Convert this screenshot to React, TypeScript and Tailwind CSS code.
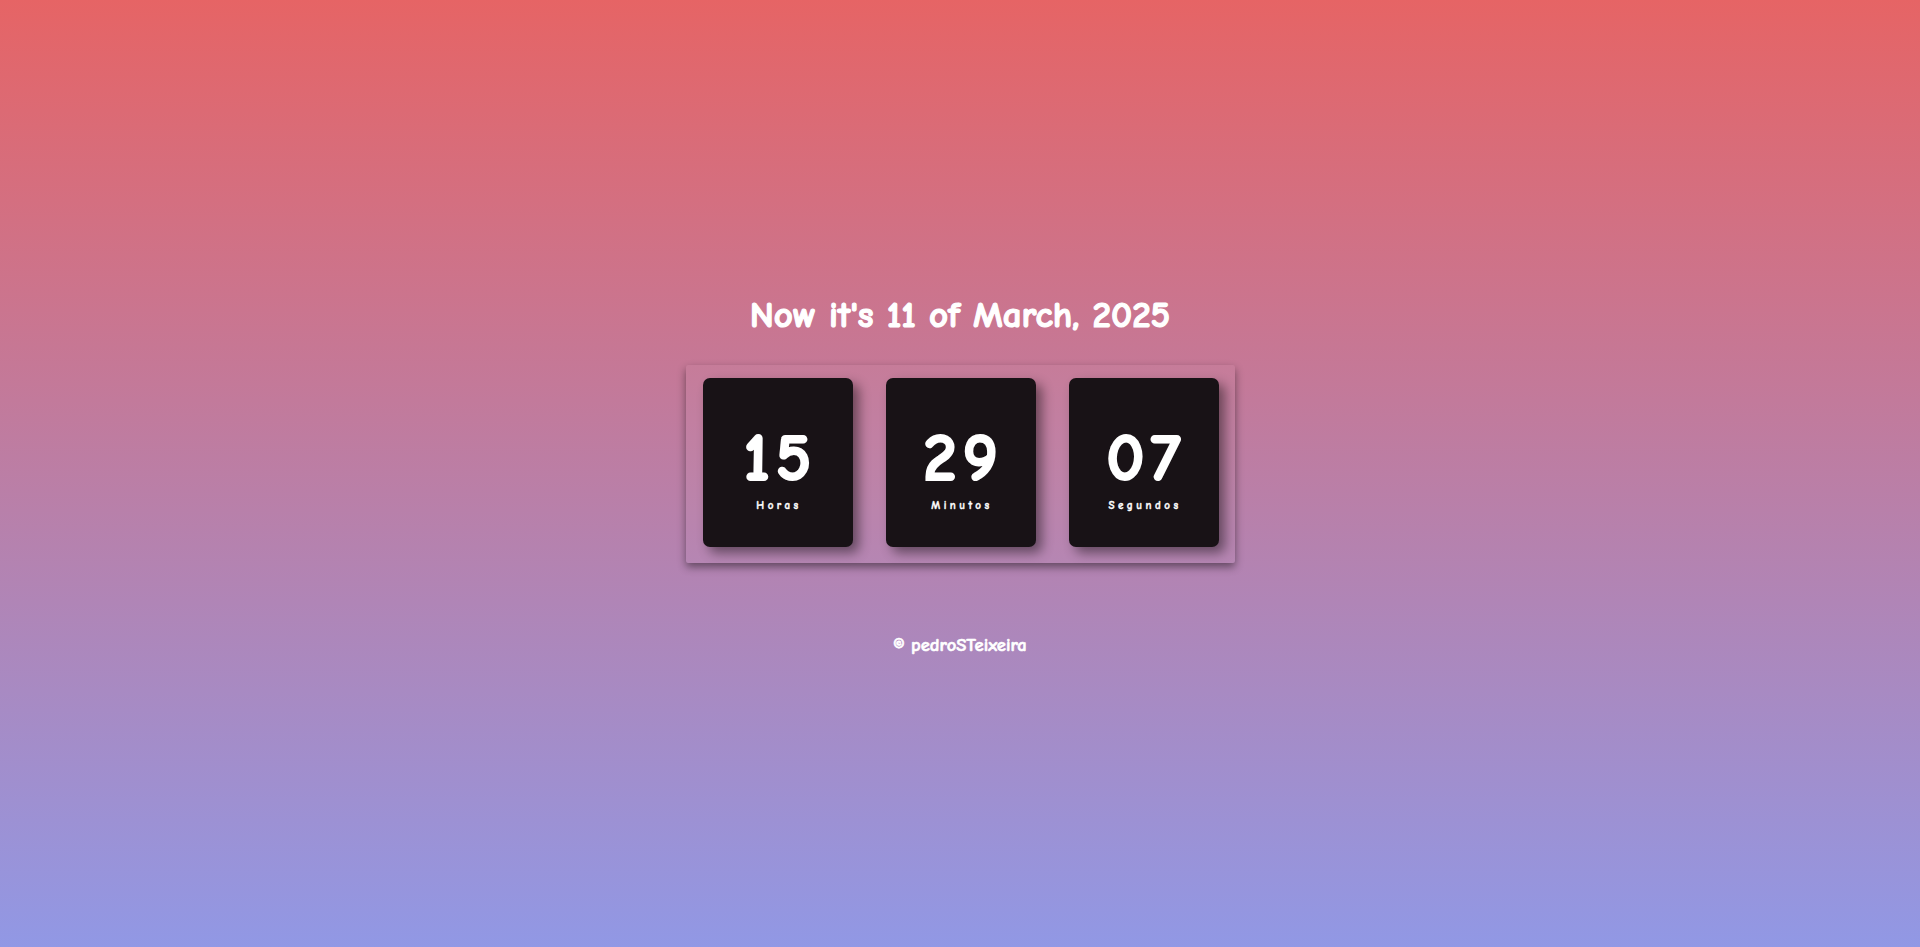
const units = [
  { value: '15', label: 'Horas' },
  { value: '29', label: 'Minutos' },
  { value: '07', label: 'Segundos' },
];

export default function App() {
  return (
    <div className="min-h-screen w-full bg-[linear-gradient(#e66465,#9198e5)] flex flex-col items-center justify-center text-white font-['Comic_Sans_MS','Comic_Neue','Liberation_Sans',sans-serif]">
      <h1 className="text-[37px] leading-[36px] font-bold [-webkit-text-stroke:1.2px_white] mt-[4px]">Now it's 11 of March, 2025</h1>

      {/* clock panel */}
      <div className="mt-[32px] flex gap-[33px] pl-[17px] pr-[16px] pt-[13px] pb-[16px] rounded-[2px] bg-white/[0.03] shadow-[0_4px_8px_rgba(0,0,0,0.45)]">
        {units.map((u) => (
          <div
            key={u.label}
            className="w-[150px] h-[169px] rounded-[7px] bg-[#181216] flex flex-col items-center justify-center shadow-[6px_6px_12px_rgba(0,0,0,0.45)]"
          >
            <span className="text-[67px] leading-[60px] font-bold tracking-[6px] pl-[6px] mt-[17px] [-webkit-text-stroke:2.2px_white]">{u.value}</span>
            <span className="text-[11px] leading-[12px] font-bold tracking-[3.5px] mt-[11px] pl-[3px] [-webkit-text-stroke:0.4px_white]">{u.label}</span>
          </div>
        ))}
      </div>

      <p className="mt-[72px] text-[18.5px] leading-[20px] font-bold [-webkit-text-stroke:0.6px_white]">© pedroSTeixeira</p>
    </div>
  );
}
